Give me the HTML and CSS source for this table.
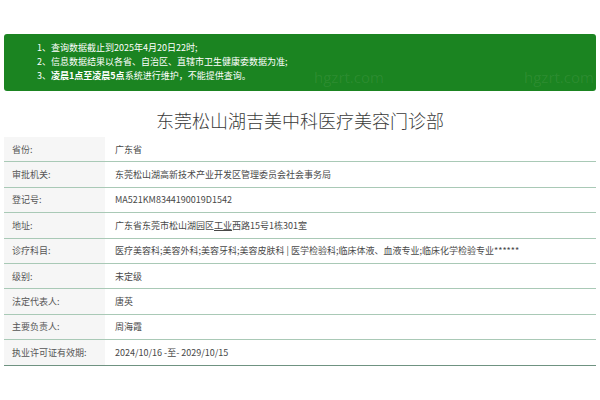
FILE: index.html
```html
<!DOCTYPE html>
<html lang="zh-CN">
<head>
<meta charset="utf-8">
<link rel="stylesheet" href="styles.css">
</head>
<body>
<div class="page">
  <div class="notice">
    <div class="line">1、查询数据截止到2025年4月20日22时;</div>
    <div class="line">2、信息数据结果以各省、自治区、直辖市卫生健康委数据为准;</div>
    <div class="line">3、<b>凌晨1点至凌晨5点</b>系统进行维护，不能提供查询。</div>
    <span class="wm wm1">hgzrt.com</span>
    <span class="wm wm2">hgzrt.com</span>
  </div>
  <h1 class="title">东莞松山湖吉美中科医疗美容门诊部</h1>
  <div class="table">
    <div class="row"><div class="label">省份:</div><div class="value">广东省</div></div>
    <div class="row"><div class="label">审批机关:</div><div class="value">东莞松山湖高新技术产业开发区管理委员会社会事务局</div></div>
    <div class="row"><div class="label">登记号:</div><div class="value">MA521KM8344190019D1542</div></div>
    <div class="row"><div class="label">地址:</div><div class="value">广东省东莞市松山湖园区<u>工业</u>西路15号1栋301室</div></div>
    <div class="row"><div class="label">诊疗科目:</div><div class="value">医疗美容科;美容外科;美容牙科;美容皮肤科 | 医学检验科;临床体液、血液专业;临床化学检验专业******</div></div>
    <div class="row"><div class="label">级别:</div><div class="value">未定级</div></div>
    <div class="row"><div class="label">法定代表人:</div><div class="value">唐英</div></div>
    <div class="row"><div class="label">主要负责人:</div><div class="value">周海霞</div></div>
    <div class="row last"><div class="label">执业许可证有效期:</div><div class="value">2024/10/16 -至- 2029/10/15</div></div>
  </div>
</div>
</body>
</html>
```

FILE: styles.css
```css
html, body {
  margin: 0;
  padding: 0;
  background: #fff;
}
body {
  font-family: "Noto Sans CJK SC", "Noto Sans", sans-serif;
  color: #444;
}
.page {
  padding: 34px 4px 0 4px;
}
.notice {
  position: relative;
  overflow: hidden;
  background: #1b8421;
  border-radius: 3px;
  color: #fff;
  font-size: 9px;
  line-height: 14px;
  padding: 7px 20px 8px 33px;
  height: 42px;
}
.notice b {
  font-weight: bold;
}
.wm {
  position: absolute;
  top: 34px;
  font-family: "Open Sans", sans-serif;
  font-size: 15px;
  color: rgba(255, 255, 255, 0.08);
  line-height: 18px;
}
.wm1 { left: 310px; }
.wm2 { left: 520px; }
.title {
  margin: 17px 0 5px 0;
  text-align: center;
  font-weight: 300;
  font-size: 18px;
  line-height: 24px;
  color: #3a3a3a;
}
.table {
  display: flex;
  flex-direction: column;
}
.row {
  display: grid;
  grid-template-columns: 101px 1fr;
  height: 24.4px;
  border-bottom: 1px solid #a9c9b6;
  font-size: 9px;
  align-items: stretch;
}
.row.last {
  border-bottom-color: #6f9281;
}
.label {
  background: #f6f6f6;
  color: #555;
  padding-left: 8px;
  display: flex;
  align-items: center;
}
.value {
  padding-left: 10px;
  color: #484848;
  display: flex;
  align-items: center;
  white-space: nowrap;
}
```
